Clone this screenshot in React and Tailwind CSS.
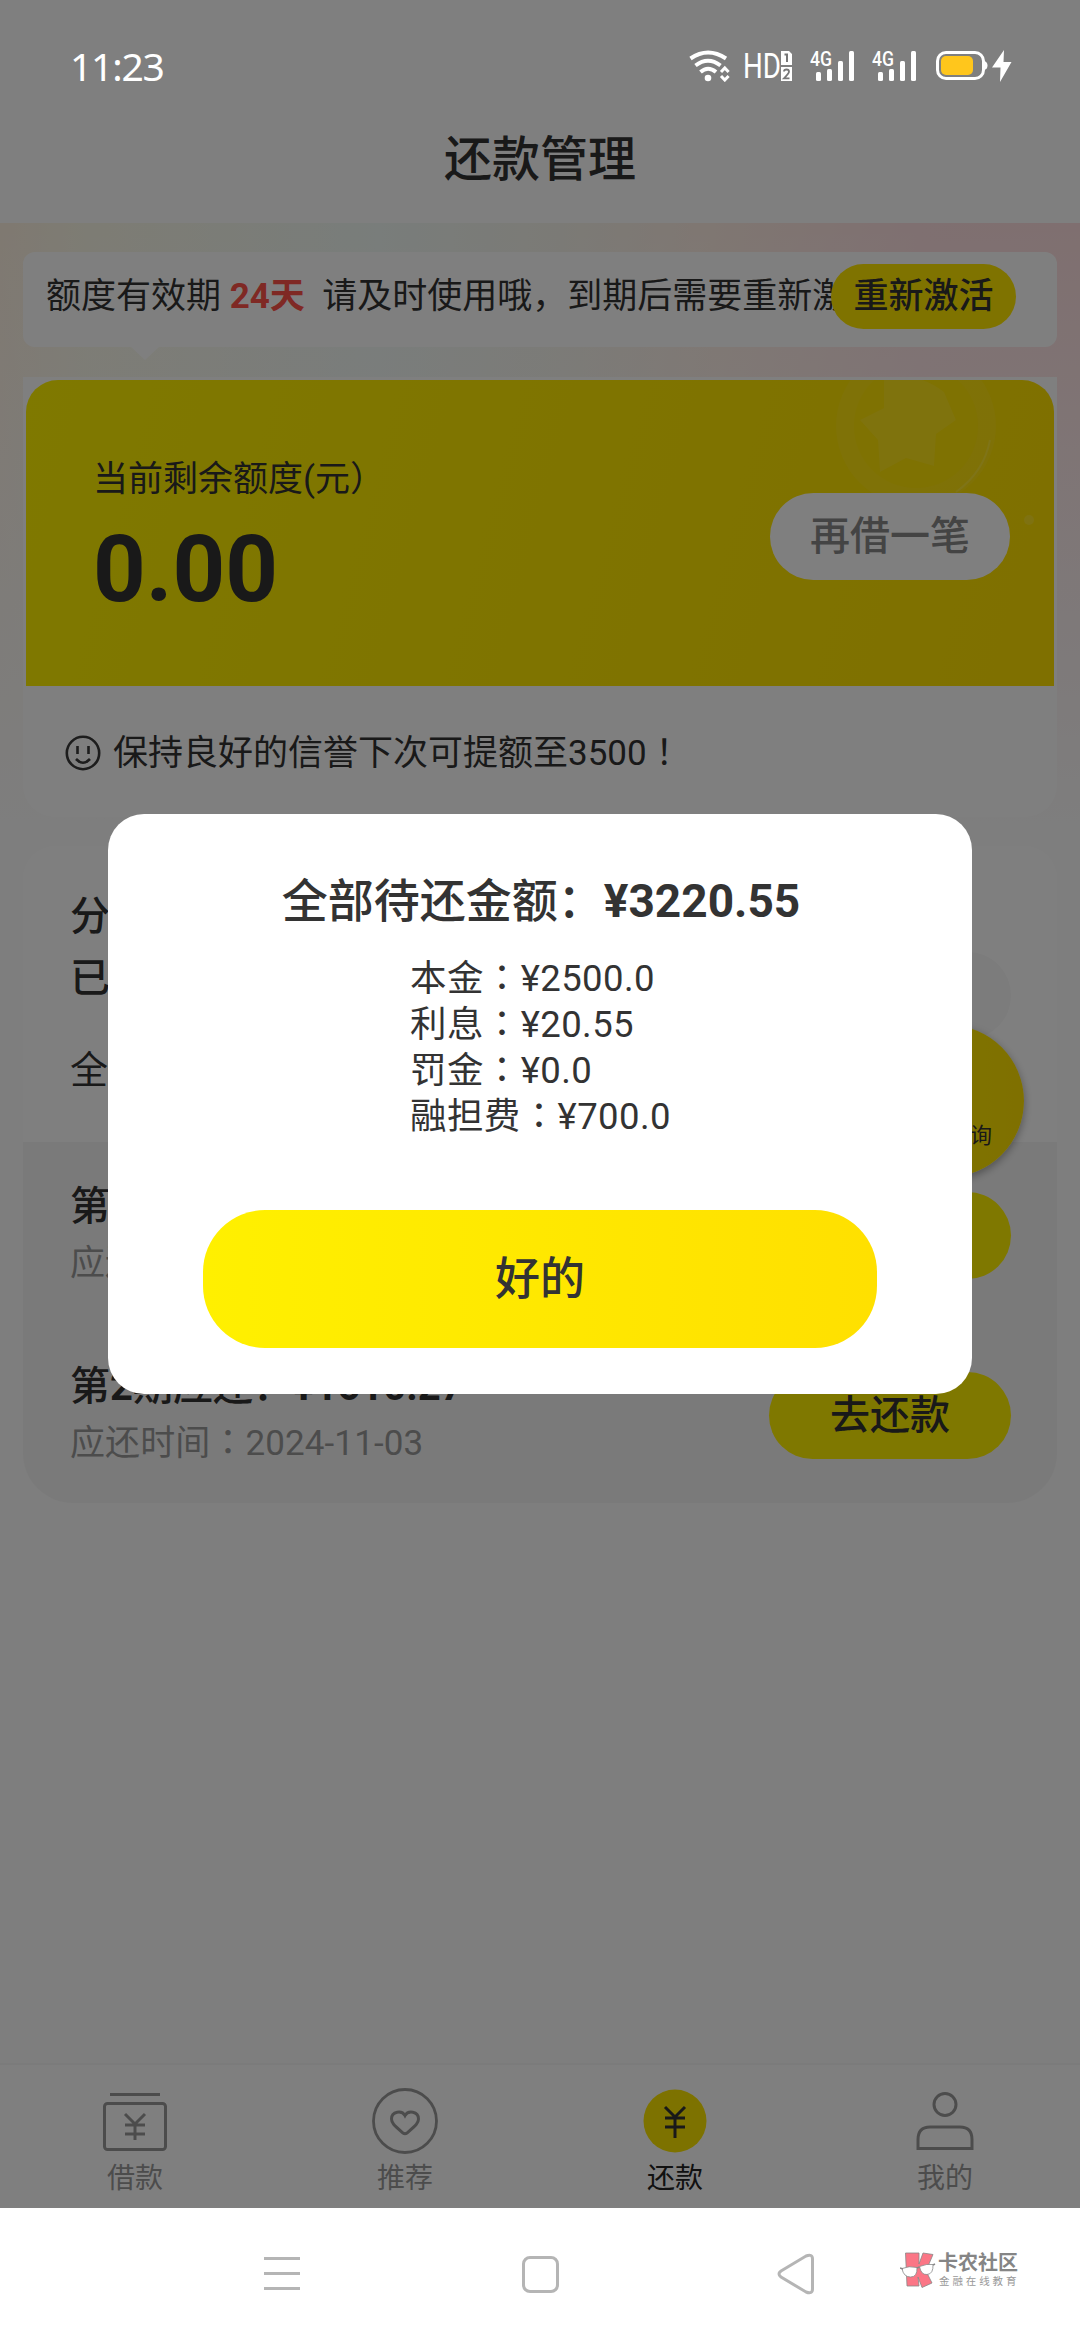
const bills = [
  { no: 1, amount: "¥1610.28", date: "2024-10-03" },
  { no: 2, amount: "¥1610.27", date: "2024-11-03" },
];

const details = [
  { label: "本金", value: "¥2500.0" },
  { label: "利息", value: "¥20.55" },
  { label: "罚金", value: "¥0.0" },
  { label: "融担费", value: "¥700.0" },
];

// full-width punctuation centred in its cell
const Mid = ({ children }) => (
  <span className="font-['Noto_Sans_CJK_TC',sans-serif]">{children}</span>
);

const Signal = () => (
  <svg width="46" height="32" viewBox="0 0 46 32" fill="#fff">
    <text x="0" y="16" fontSize="20.5" fontFamily="Roboto, sans-serif" fontWeight="500" textLength="22" lengthAdjust="spacingAndGlyphs">4G</text>
    <rect x="6" y="22" width="5" height="9" rx="1.5" />
    <rect x="17" y="19" width="5" height="12" rx="1.5" />
    <rect x="28" y="11" width="5" height="20" rx="1.5" />
    <rect x="39" y="1" width="5" height="30" rx="1.5" />
  </svg>
);

const StatusBar = () => (
  <div className="relative z-20 flex h-[96px] items-center justify-between pt-9 pr-[68px] pl-[70px] text-white">
    <span className="pb-[2px] font-['Noto_Sans',sans-serif] text-[39px] leading-none tracking-[-1.2px]">11:23</span>
    <div className="flex items-center">
      <svg width="42" height="32" viewBox="0 0 42 32" fill="none" stroke="#fff" strokeWidth="4">
        <path d="M1.5 8.5 Q19 -3.5 37 8.5" />
        <path d="M6.5 15.5 Q19 6 31.5 15.5" />
        <path d="M11.5 22 Q19 15.5 27 22" />
        <circle cx="19" cy="28" r="3.3" fill="#fff" stroke="none" />
        <path d="M32 22 L35.8 18 L39.6 22 M32 26 L35.8 30 L39.6 26" strokeWidth="3" />
      </svg>
      <svg className="ml-3" width="50" height="32" viewBox="0 0 50 32">
        <text x="0" y="28" fontSize="35" fontFamily="Roboto, sans-serif" fill="#fff" textLength="38" lengthAdjust="spacingAndGlyphs">HD</text>
        <path d="M38 1 h8 l3 3 v11 h-11 z M38 17 h11 v14 h-11 z" fill="#fff" />
        <path d="M41.5 4.5 h2.5 v7.500" fill="none" stroke="#777" strokeWidth="2" />
        <path d="M41 21.500 q0 -2 2.500 -2 t2.500 2.300 q0 1.500 -5 6.500 h5.500" fill="none" stroke="#777" strokeWidth="1.800" />
      </svg>
      <div className="ml-[17px] flex gap-4">
        <Signal />
        <Signal />
      </div>
      <svg className="ml-[18px]" width="76" height="32" viewBox="0 0 76 32">
        <rect x="1.5" y="2.5" width="46" height="26" rx="8.5" fill="none" stroke="#fff" strokeWidth="3" />
        <path d="M48.5 11 q3 1 3 4.500 t-3 4.500 z" fill="#fff" />
        <rect x="5" y="6" width="32" height="19" rx="5" fill="#ffc61c" />
        <path d="M68 0 L56 17.500 h8.500 L64 32 L75.500 12 h-8 z" fill="#fff" />
      </svg>
    </div>
  </div>
);

const Yen = ({ top, height }) => (
  <path d={`M22 ${top} l10 10 l10 -10 M32 ${top + 10} v${height - 10} M22 ${top + 11} h20 M22 ${top + 20} h20`} />
);

const tabs = [
  {
    name: "借款",
    color: "text-[#999]",
    icon: (
      <svg width="64" height="66" viewBox="0 0 64 66" fill="none" stroke="#999" strokeWidth="3">
        <path d="M7 6.500 h50" />
        <rect x="1.500" y="15.500" width="61" height="46" rx="3" />
        <Yen top={26} height={26} />
      </svg>
    ),
  },
  {
    name: "推荐",
    color: "text-[#999]",
    icon: (
      <svg width="66" height="66" viewBox="0 0 66 66" fill="none" stroke="#999" strokeWidth="2.8">
        <circle cx="33" cy="33" r="31.500" />
        <path d="M33 27.500 C30 22 19.500 23 19.500 31 C19.500 35 22 37 31 45 Q33 46.500 35 45 C44 37 46.500 35 46.500 31 C46.500 23 36 22 33 27.500 Z" strokeWidth="3" />
      </svg>
    ),
  },
  {
    name: "还款",
    color: "text-[#222]",
    icon: (
      <svg width="64" height="66" viewBox="0 0 64 66" fill="none" stroke="#333" strokeWidth="3">
        <circle cx="32" cy="33" r="31.500" fill="#fae400" stroke="none" />
        <Yen top={19} height={31} />
      </svg>
    ),
  },
  {
    name: "我的",
    color: "text-[#999]",
    icon: (
      <svg width="64" height="66" viewBox="0 0 64 66" fill="none" stroke="#999" strokeWidth="3">
        <circle cx="32" cy="16.500" r="11" />
        <path d="M5 60.500 v-9 Q5 39 17 39 h30 Q59 39 59 51.500 v9 z" />
      </svg>
    ),
  },
];

const NoticeBar = () => (
  <div className="relative flex h-[95px] items-center rounded-[12px] bg-white pb-[5px] pl-[23px]">
    <div className="w-[789px] overflow-hidden text-[35px] leading-[50px] whitespace-pre text-[#333]">
      额度有效期 <span className="font-bold text-[#ff5248]">24天</span>{"  "}请及时使用哦，到期后需要重新激活
    </div>
    <div className="absolute top-[12px] right-[41px] flex h-[65px] w-[185px] items-center justify-center rounded-full bg-[#ffe600] pt-[1px] text-[35px] font-medium text-[#333]">
      重新激活
    </div>
    <svg className="absolute top-[94px] left-[107px]" width="30" height="14" viewBox="0 0 30 14" fill="#fff">
      <path d="M0 0 h30 L15 14 z" />
    </svg>
  </div>
);

const QuotaCard = () => (
  <div className="mt-[30px] h-[440px] rounded-b-[32px] bg-white px-[3px] pt-[3px]">
    <div className="relative flex h-[306px] justify-between overflow-hidden rounded-t-[32px] bg-[linear-gradient(105deg,#fff200,#ffe000)] pr-[44px] pl-[67px]">
      <svg className="absolute top-0 right-0" width="270" height="150" viewBox="0 0 270 150">
        <circle cx="132" cy="46" r="80" fill="#ffe838" fillOpacity="0.25" />
        <circle cx="132" cy="46" r="62" fill="#ffe400" fillOpacity="0.7" />
        <path d="M100 0 Q132 -10 160 12 L172 40 L152 54 L150 86 L122 78 L96 92 L94 60 L76 40 L100 28 z" fill="#ffe838" fillOpacity="0.45" />
        <path d="M206 60 Q200 92 172 112" fill="none" stroke="#ffee50" strokeOpacity="0.5" strokeWidth="2" />
        <circle cx="245" cy="140" r="5" fill="#ffee60" fillOpacity="0.35" />
      </svg>
      <div className="relative pt-[75px] text-[#333]">
        <div className="text-[35px] leading-[50px]">当前剩余额度(元）</div>
        <div className="mt-[8px] text-[92px] leading-[114px] font-bold">0.00</div>
      </div>
      <div className="relative mt-[113px] flex h-[87px] w-[240px] items-center justify-center rounded-full bg-white text-[40px] font-medium text-[#888]">
        再借一笔
      </div>
    </div>
    <div className="flex h-[134px] items-center pl-[39px] text-[35px] text-[#333]">
      <svg className="mr-[12px]" width="36" height="36" viewBox="0 0 36 36" fill="none" stroke="#3a3a3a" strokeWidth="2.6">
        <circle cx="18" cy="18" r="16.200" />
        <path d="M12.500 11 v8 M23.500 11 v8 M11 24 q7 7.500 14 0" />
      </svg>
      <span className="pb-[1px]">保持良好的信誉下次可提额至3500<Mid>！</Mid></span>
    </div>
  </div>
);

const BillCard = () => (
  <div className="mt-[29px]">
    <div className="flex h-[296px] justify-between rounded-t-[32px] bg-white pr-[46px] pl-[47px]">
      <div className="pt-[40px] text-[#333]">
        <div className="text-[40px] leading-[62px] font-medium">分期账单</div>
        <div className="text-[40px] leading-[62px] font-medium">已还金额</div>
        <div className="mt-[29px] text-[38px] leading-[62px]">全部待还</div>
      </div>
      <div className="mt-[106px] h-[87px] w-[240px] rounded-full bg-[#f8f8f8]" />
    </div>
    <div className="h-[361px] rounded-b-[50px] bg-[#f5f5f5] pr-[46px] pl-[47px]">
      {bills.map((b) => (
        <div key={b.no} className="flex h-[180px] justify-between pt-[37px]">
          <div>
            <div className="text-[40px] leading-[56px] font-bold text-[#333]">
              <span className="font-medium">第</span>{b.no}<span className="font-medium">期应还：</span>{b.amount}
            </div>
            <div className="mt-[-3px] text-[35px] leading-[56px] tracking-[0.1px] text-[#999]">
              应还时间<Mid>：</Mid>{b.date}
            </div>
          </div>
          <div className="mt-[13px] flex h-[87px] w-[242px] items-center justify-center rounded-full bg-[#fff000] text-[40px] font-medium text-[#333]">
            去还款
          </div>
        </div>
      ))}
    </div>
  </div>
);

const TabBar = () => (
  <div className="grid h-[145px] grid-cols-4 border-t-2 border-[#f6f6f6] bg-white pt-[23px]">
    {tabs.map((t) => (
      <div key={t.name} className="flex flex-col items-center">
        {t.icon}
        <span className={`mt-[5px] text-[28px] leading-[40px] ${t.color}`}>{t.name}</span>
      </div>
    ))}
  </div>
);

const RepayDialog = () => (
  <div className="absolute inset-0 z-10 flex items-center justify-center bg-black/50">
    <div className="flex h-[580px] w-[864px] flex-col items-center rounded-[36px] bg-white text-[#333]">
      <div className="mt-[55px] ml-[2px] text-[46px] leading-[64px] font-bold">
        <span className="font-medium">全部待还金额：</span>¥3220.55
      </div>
      <div className="mt-[20px] grid w-[260px] text-[36.5px] leading-[46px] tracking-[0.4px] whitespace-nowrap">
        {details.map((d) => (
          <div key={d.label} className="h-[46px]">{d.label}<Mid>：</Mid>{d.value}</div>
        ))}
      </div>
      <div className="mt-[73px] flex h-[138px] w-[674px] items-center justify-center rounded-[62px] bg-linear-to-r from-[#fff000] to-[#ffe000] pt-[1px] text-[45px] font-medium">
        好的
      </div>
    </div>
  </div>
);

const Watermark = () => (
  <div className="flex items-center">
    <svg width="36" height="36" viewBox="0 0 36 36" stroke="#888" strokeWidth="0.8" strokeLinejoin="round">
      <path d="M5.500 1 H19 V12 L23 1 L33 2.500 L26 19 L32 31 L22 35.500 L18 25 L19 34 L7 34 z" fill="#fb7686" />
      <path d="M2 16.500 Q9 13.500 17 15.500 Q17.500 25 10.500 25 Q3.500 25 2 16.500 z M19.500 14.500 Q27 11.500 33 12.500 Q33.500 22 27 22.500 Q21 23 19.500 14.500 z" fill="#fff" />
      <path d="M0 16 L3 17 M17 16 L19.500 15 M33 13 L35 12" strokeWidth="1.500" />
    </svg>
    <div className="ml-[2px] text-[#858585]">
      <div className="text-[20px] leading-[20px] font-bold">卡农社区</div>
      <div className="mt-[2px] pl-[1px] text-[10.500px] leading-[13px] tracking-[2.9px] text-[#999]">金融在线教育</div>
    </div>
  </div>
);

const SystemNav = () => (
  <div className="flex h-[132px] items-center bg-white pl-[264px]">
    <svg width="36" height="36" viewBox="0 0 36 36" stroke="#b5b5b5" strokeWidth="3">
      <path d="M0 2.500 h36 M0 17.500 h36 M0 32.500 h36" />
    </svg>
    <div className="ml-[222px] h-[37px] w-[37px] rounded-[8px] border-[3px] border-[#b5b5b5]" />
    <svg className="ml-[218px]" width="38" height="42" viewBox="0 0 38 42" fill="none" stroke="#b5b5b5" strokeWidth="3">
      <path d="M4 18 L29 3 Q35.500 0.500 35.500 6 V36 Q35.500 41.500 29 39 L4 24 Q0 21 4 18 z" />
    </svg>
    <div className="mb-[8px] ml-[85px]">
      <Watermark />
    </div>
  </div>
);

export default function App() {
  return (
    <div className="flex h-[2340px] w-[1080px] flex-col overflow-hidden bg-white font-['Roboto','Noto_Sans_CJK_SC',sans-serif]">
      <div className="relative flex h-[2208px] flex-col">
        <header className="bg-white">
          <StatusBar />
          <h1 className="flex h-[127px] items-center justify-center text-[48px] font-medium text-[#333]">还款管理</h1>
        </header>
        <main className="relative flex-1 bg-[linear-gradient(180deg,transparent_0,#fcfcfc_600px),linear-gradient(90deg,#fff2e2_0%,#fbf9e8_8%,#f2faf6_35%,#f7f5ec_52%,#ffeee4_66%,#ffe0e2_85%,#ffdfe0_100%)] px-[23px] pt-[29px]">
          <NoticeBar />
          <QuotaCard />
          <BillCard />
          <div className="absolute top-[802px] left-[870px] flex h-[152px] w-[154px] items-end justify-center rounded-full bg-linear-to-r from-[#fff000] to-[#ffe000] pb-[25px] pl-[2px] text-[22px] text-[#333] shadow-[0_3px_9px_rgba(0,0,0,0.35)]">
            在线咨询
          </div>
        </main>
        <TabBar />
        <RepayDialog />
      </div>
      <SystemNav />
    </div>
  );
}
